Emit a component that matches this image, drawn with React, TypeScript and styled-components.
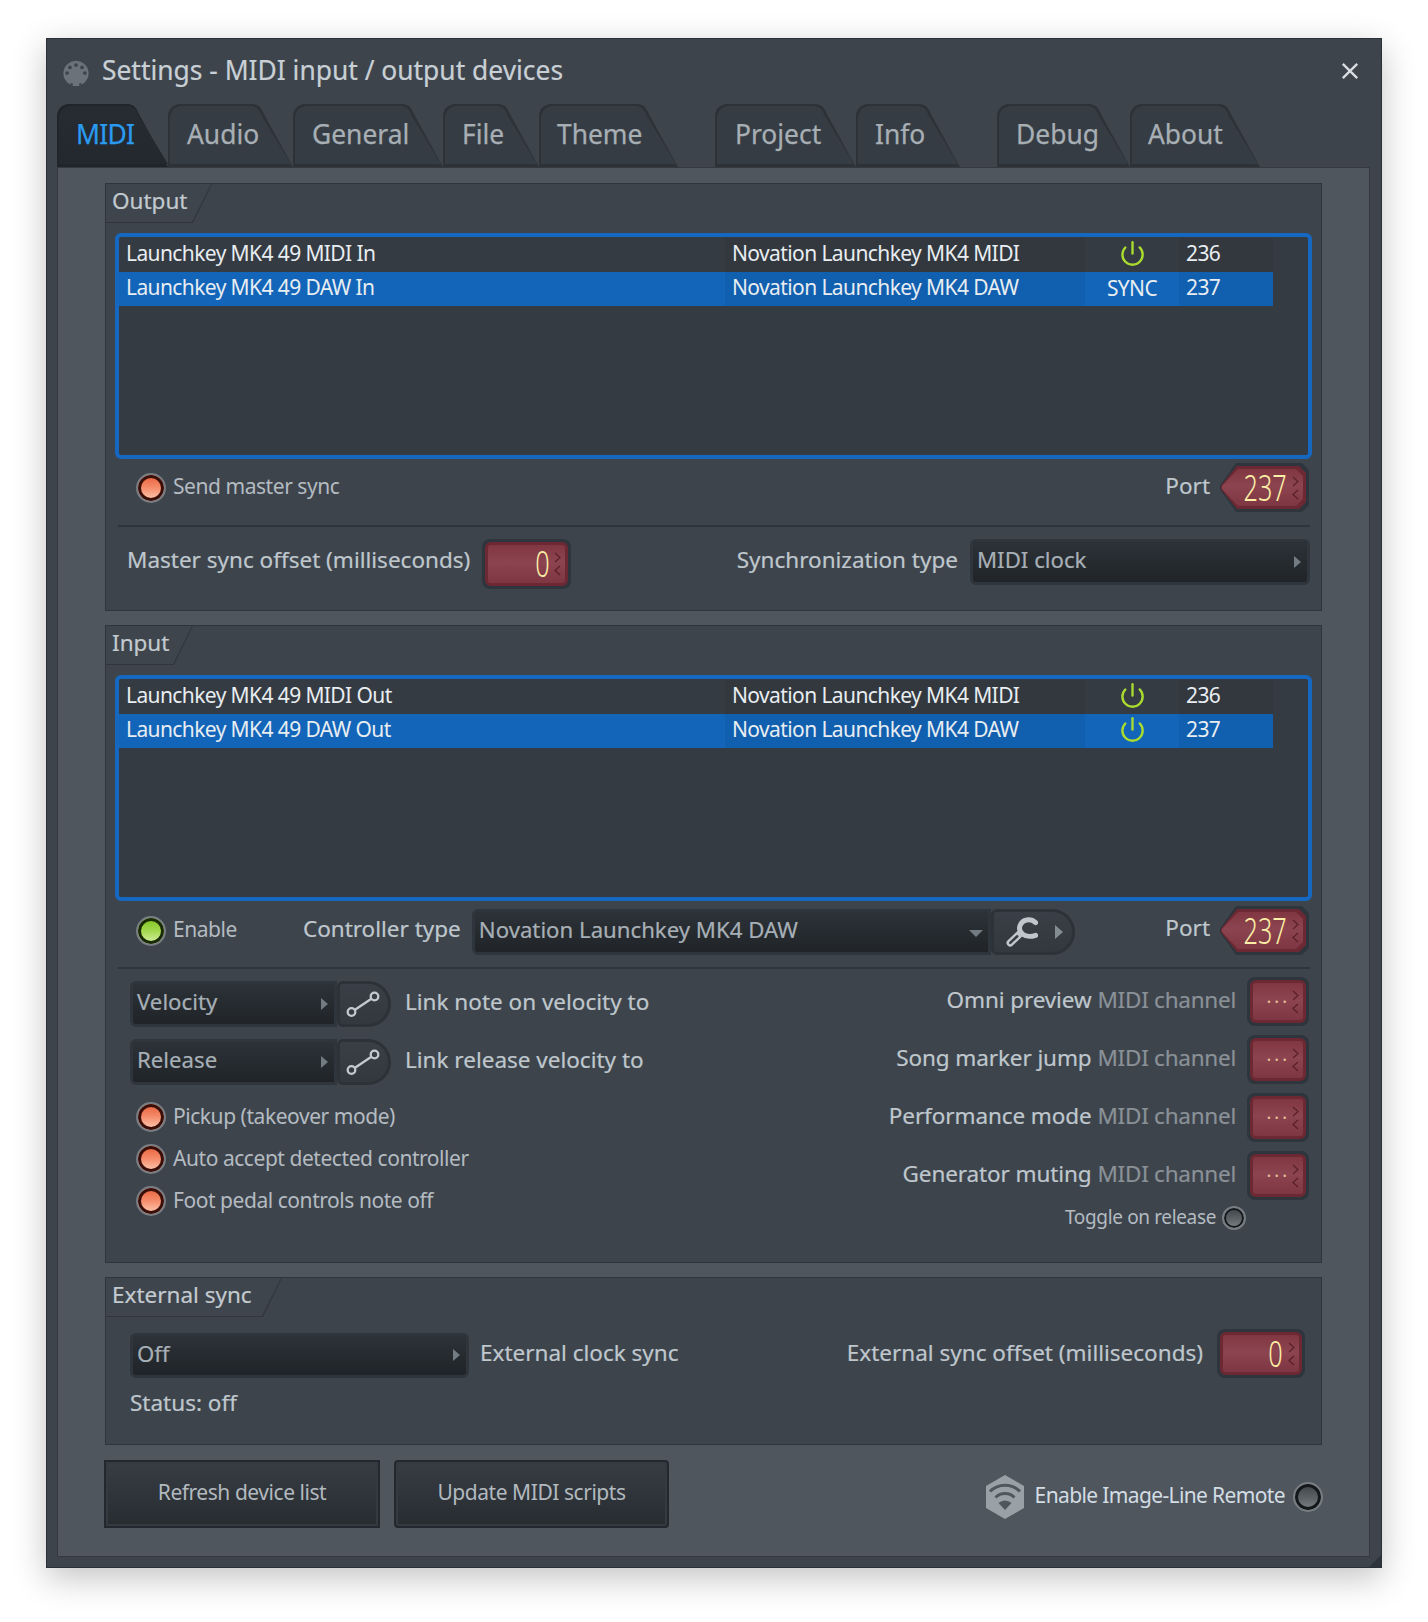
import React from 'react';
import styled, { createGlobalStyle } from 'styled-components';
import { Power } from 'lucide-react';

const Global = createGlobalStyle`
  html, body { margin: 0; background: #fff; }
  body { font-family: "Noto Sans", "Open Sans", sans-serif; }
  * { box-sizing: border-box; }
`;

const Page = styled.div`
  width: 1428px;
  height: 1622px;
  padding: 38px 46px;
  background: #fff;
  overflow: hidden;
`;

const Window = styled.div`
  position: relative;
  width: 1336px;
  height: 1530px;
  background: #3d444c;
  border: 1px solid #2a3037;
  box-shadow: 0 10px 32px rgba(0, 0, 0, 0.24);
  padding: 0 11px 10px 10px;
  display: flex;
  flex-direction: column;
`;

const Grip = styled.div`
  position: absolute;
  right: 0;
  bottom: 0;
  width: 12px;
  height: 12px;
  background: #2e343b;
  clip-path: polygon(100% 0, 100% 100%, 0 100%);
`;

const TitleBar = styled.div`
  height: 65px;
  flex: none;
  display: flex;
  align-items: center;
  padding: 2px 11px 0 5px;
  gap: 12px;
`;

const Title = styled.div`
  flex: 1;
  font-size: 26.4px;
  color: #c9d0d5;
  line-height: 1;
  padding-bottom: 4px;
  -webkit-text-stroke: 0.2px #c9d0d5;
`;

const CloseBtn = styled.svg`
  width: 18px;
  height: 18px;
  flex: none;
  margin-bottom: 3px;
`;

const TabBar = styled.div`
  display: flex;
  height: 63px;
  flex: none;
`;

const tabShape = `polygon(0 10px, 2px 5px, 5px 2px, 10px 0, calc(100% - 39px) 0, calc(100% - 34px) 2px, calc(100% - 31px) 6px, calc(100% - 28px) 12px, 100% 100%, 0 100%)`;

const Tab = styled.div<{ $w: number; $pad: number; $active?: boolean; $gap?: number }>`
  position: relative;
  width: ${(p) => p.$w}px;
  margin-left: ${(p) => p.$gap ?? 0}px;
  padding-left: ${(p) => p.$pad}px;
  flex: none;
  display: flex;
  align-items: center;
  font-size: 26.4px;
  line-height: 1;
  letter-spacing: ${(p) => (p.$active ? -0.7 : 0)}px;
  color: ${(p) => (p.$active ? '#2a9bf0' : '#a7afb5')};
  -webkit-text-stroke: 0.25px ${(p) => (p.$active ? '#2a9bf0' : '#a7afb5')};
  padding-bottom: 3px;
  &::before {
    content: '';
    position: absolute;
    inset: 0;
    background: ${(p) => (p.$active ? '#1f252a' : '#2c3238')};
    clip-path: ${tabShape};
  }
  &::after {
    content: '';
    position: absolute;
    inset: 2px ${(p) => (p.$active ? 0 : 2)}px 3px 2px;
    background: ${(p) => (p.$active ? 'linear-gradient(#262c31, #22282d)' : '#363c43')};
    clip-path: ${tabShape};
  }
  span {
    position: relative;
    z-index: 1;
  }
`;

const Panel = styled.div`
  flex: 1;
  background: #4f565e;
  border: 1px solid #33393f;
  padding: 15px 47px 0 47px;
  display: flex;
  flex-direction: column;
  gap: 14px;
`;

const Group = styled.section<{ $h: number }>`
  height: ${(p) => p.$h}px;
  flex: none;
  background: #3d444c;
  border: 1px solid #2f353c;
  padding: 0 9px;
  display: flex;
  flex-direction: column;
`;

const GroupHeading = styled.div<{ $w: number }>`
  position: relative;
  width: ${(p) => p.$w}px;
  height: 39px;
  margin-left: -9px;
  flex: none;
  display: flex;
  align-items: center;
  padding: 0 0 7px 6px;
  font-size: 22.5px;
  color: #c3cacf;
  -webkit-text-stroke: 0.2px #c3cacf;
  background: #30363c;
  clip-path: polygon(0 0, 100% 0, calc(100% - 19px) 100%, 0 100%);
  &::before {
    content: '';
    position: absolute;
    inset: 0 1px 1px 0;
    background: #3e454d;
    clip-path: polygon(0 0, 100% 0, calc(100% - 19px) 100%, 0 100%);
  }
  span {
    position: relative;
  }
`;

const List = styled.div`
  margin-top: 10px;
  height: 226px;
  flex: none;
  background: #353b42;
  border: 4px solid #1567c0;
  border-radius: 6px;
  padding-top: 1px;
`;

const Row = styled.div<{ $selected?: boolean }>`
  width: 1154px;
  height: 34px;
  display: grid;
  grid-template-columns: 606px 360px 94px 94px;
  grid-template-rows: 34px;
  font-size: 21px;
  letter-spacing: -0.6px;
  line-height: 28px;
  color: #e8edf1;
  background: ${(p) => (p.$selected ? '#1265b9' : 'transparent')};
`;

const Cell = styled.div<{ $center?: boolean; $dim?: boolean }>`
  padding: 0 0 ${(p) => (p.$center ? 3 : 4)}px ${(p) => (p.$center ? 0 : 7)}px;
  display: flex;
  align-items: center;
  justify-content: ${(p) => (p.$center ? 'center' : 'flex-start')};
  background: ${(p) => (p.$dim ? 'rgba(0,0,0,0.05)' : 'transparent')};
  white-space: nowrap;
`;

const FlexRow = styled.div<{ $mt?: number; $pl?: number; $pr?: number; $h: number }>`
  display: flex;
  align-items: center;
  flex: none;
  height: ${(p) => p.$h}px;
  margin-top: ${(p) => p.$mt ?? 0}px;
  padding-left: ${(p) => p.$pl ?? 0}px;
  padding-right: ${(p) => p.$pr ?? 0}px;
`;

const Push = styled.div`
  margin-left: auto;
  display: flex;
  align-items: center;
`;

const Label = styled.div<{ $ml?: number; $mr?: number; $pb?: number }>`
  font-size: 22.5px;
  line-height: 30px;
  color: #bfc7cd;
  -webkit-text-stroke: 0.2px #bfc7cd;
  white-space: nowrap;
  margin-left: ${(p) => p.$ml ?? 0}px;
  margin-right: ${(p) => p.$mr ?? 0}px;
  padding-bottom: ${(p) => p.$pb ?? 5}px;
`;

const Strong = styled.span`
  letter-spacing: -0.1px;
`;

const Dim = styled.span`
  color: #8a9197;
  -webkit-text-stroke: 0.2px #8a9197;
  letter-spacing: -0.25px;
`;

const CheckLabel = styled.div<{ $small?: boolean }>`
  font-size: ${(p) => (p.$small ? 19 : 21)}px;
  letter-spacing: ${(p) => (p.$small ? -0.36 : -0.45)}px;
  line-height: 28px;
  color: #b4bbc1;
  white-space: nowrap;
  padding-bottom: 3px;
`;

const ledColors = {
  red: { ring: '#3a0f09', grad: 'linear-gradient(#e8603a, #f58d6c 50%, #ffcfb8)' },
  green: { ring: '#1a2a06', grad: 'linear-gradient(#7cc41e, #a4d94f 50%, #d9f2a8)' },
  off: { ring: '#14181b', grad: 'linear-gradient(#3e4347, #5c6266 55%, #7c8387)' },
};

const Led = styled.div<{ $state: 'red' | 'green' | 'off'; $size?: number }>`
  width: ${(p) => p.$size ?? 30}px;
  height: ${(p) => p.$size ?? 30}px;
  flex: none;
  border-radius: 50%;
  border: 2px solid #777d82;
  background: ${(p) => ledColors[p.$state].grad};
  box-shadow: inset 0 0 0 ${(p) => ((p.$size ?? 30) < 28 ? 2 : 3)}px ${(p) => ledColors[p.$state].ring};
`;

const CheckRow = styled.div`
  display: flex;
  align-items: center;
  gap: 7px;
  height: 30px;
`;

const hexShape = 'polygon(16px 0, calc(100% - 7px) 0, 100% 7px, 100% calc(100% - 7px), calc(100% - 7px) 100%, 16px 100%, 0 54%, 0 46%)';

const SpinnerFrame = styled.div<{ $w: number; $h: number; $hex?: boolean }>`
  position: relative;
  width: ${(p) => p.$w}px;
  height: ${(p) => p.$h}px;
  flex: none;
  background: #2f353c;
  border-radius: 8px;
  clip-path: ${(p) => (p.$hex ? hexShape : 'none')};
  &::before {
    content: '';
    position: absolute;
    inset: 3px 3px 3px ${(p) => (p.$hex ? 1 : 3)}px;
    background: #6c2833;
    border-radius: 6px;
    clip-path: ${(p) => (p.$hex ? hexShape : 'none')};
  }
  &::after {
    content: '';
    position: absolute;
    inset: 6px 6px 6px ${(p) => (p.$hex ? 2 : 6)}px;
    background: linear-gradient(180deg, #813741, #8b4450 45%, #7e3642);
    border-radius: 3px;
    clip-path: ${(p) => (p.$hex ? hexShape : 'none')};
  }
`;

const SpinnerValue = styled.div<{ $dots?: boolean }>`
  position: absolute;
  z-index: 1;
  top: 0;
  bottom: 0;
  right: ${(p) => (p.$dots ? 19 : 22)}px;
  display: flex;
  align-items: center;
  color: ${(p) => (p.$dots ? '#e8c09c' : '#fbeea6')};
  font-size: ${(p) => (p.$dots ? 18 : 36)}px;
  font-weight: ${(p) => (p.$dots ? 400 : 300)};
  line-height: 1;
  transform: scaleX(${(p) => (p.$dots ? 1 : 0.7)});
  transform-origin: right center;
  letter-spacing: ${(p) => (p.$dots ? '3px' : '0')};
  padding-bottom: ${(p) => (p.$dots ? 2 : 0)}px;
`;

const SpinnerArrows = styled.svg`
  position: absolute;
  z-index: 1;
  right: 8px;
  top: 50%;
  margin-top: -12px;
  width: 10px;
  height: 24px;
`;

const SpinnerGap = styled.div`
  margin-left: 12px;
`;

const Spinner: React.FC<{ w: number; h: number; hex?: boolean; value: string }> = ({ w, h, hex, value }) => (
  <SpinnerFrame $w={w} $h={h} $hex={hex}>
    <SpinnerValue $dots={value === '···'}>{value}</SpinnerValue>
    <SpinnerArrows viewBox="0 0 10 24" fill="none" stroke="#5a1f2a" strokeWidth="1.2">
      <path d="M2 1l5 4.5L2 10" />
      <path d="M7 14l-5 4.5L7 23" />
    </SpinnerArrows>
  </SpinnerFrame>
);

const Select = styled.div<{ $w: number; $h?: number; $joined?: boolean; $mt?: number; $mb?: number }>`
  position: relative;
  width: ${(p) => p.$w}px;
  height: ${(p) => p.$h ?? 46}px;
  flex: none;
  display: flex;
  align-items: center;
  margin: ${(p) => p.$mt ?? 0}px 0 ${(p) => p.$mb ?? 0}px;
  padding: 0 0 5px 4px;
  font-size: 22.2px;
  color: #a7afb6;
  -webkit-text-stroke: 0.2px #a7afb6;
  white-space: nowrap;
  border: 3px solid #2f353c;
  border-radius: ${(p) => (p.$joined ? '6px 0 0 6px' : '6px')};
  background: linear-gradient(#2c3238, #202428);
`;

const ArrowRight = styled.i`
  position: absolute;
  right: 6px;
  top: 50%;
  margin-top: -6.5px;
  width: 0;
  height: 0;
  border-top: 6.5px solid transparent;
  border-bottom: 6.5px solid transparent;
  border-left: 7px solid #747c83;
`;

const ArrowDown = styled.i`
  position: absolute;
  right: 5px;
  top: 50%;
  margin-top: -2px;
  width: 0;
  height: 0;
  border-left: 7px solid transparent;
  border-right: 7px solid transparent;
  border-top: 7px solid #747c83;
`;

const SideButton = styled.div<{ $w: number; $pad: number; $mt?: number }>`
  position: relative;
  width: ${(p) => p.$w}px;
  height: 46px;
  flex: none;
  display: flex;
  align-items: center;
  margin-top: ${(p) => p.$mt ?? 0}px;
  padding-left: ${(p) => p.$pad}px;
  border: 3px solid #2c3238;
  border-radius: 6px 24px 24px 6px;
  background: linear-gradient(#393f46, #32383e);
`;

const ButtonArrow = styled.i`
  position: absolute;
  right: 9px;
  top: 50%;
  margin-top: -7px;
  width: 0;
  height: 0;
  border-top: 7px solid transparent;
  border-bottom: 7px solid transparent;
  border-left: 8px solid #848c93;
`;

const LinkIcon: React.FC = () => (
  <svg width="34" height="27" viewBox="0 0 34 27" fill="none" stroke="#c3c9ce" strokeWidth="2.3">
    <circle cx="5.5" cy="21" r="3.8" />
    <circle cx="28.5" cy="5.5" r="3.8" />
    <path d="M9 18.7L25 8" />
  </svg>
);

const WrenchIcon: React.FC = () => (
  <svg width="32" height="31" viewBox="0 0 34 32" fill="none" strokeLinecap="round">
    <path d="M31.5 5.5C26 0.5 17.5 2 15 8.5C12.5 15 19 23 31.5 19" stroke="#c0c7cc" strokeWidth="5.2" />
    <path d="M14 18L4.5 27" stroke="#c0c7cc" strokeWidth="7.8" />
    <path d="M12 20L4.5 27" stroke="#363c43" strokeWidth="2.6" />
  </svg>
);

const Divider = styled.div<{ $mt: number }>`
  height: 2px;
  flex: none;
  margin: ${(p) => p.$mt}px 2px 0 3px;
  background: #2e343b;
`;

const Columns = styled.div`
  flex: none;
  display: flex;
  justify-content: space-between;
  padding-right: 3px;
  margin-top: 8px;
`;

const LeftCol = styled.div`
  padding: 4px 0 0 15px;
  display: flex;
  flex-direction: column;
`;

const RightCol = styled.div`
  display: flex;
  flex-direction: column;
  align-items: flex-end;
  gap: 9px;
`;

const LinkRow = styled.div`
  display: flex;
  align-items: center;
  height: 46px;
  margin-bottom: 12px;
`;

const Checks = styled.div`
  display: flex;
  flex-direction: column;
  gap: 12px;
  margin: 5px 0 0 6px;
`;

const ChannelRow = styled.div`
  display: flex;
  align-items: center;
  gap: 11px;
  height: 49px;
`;

const ToggleRow = styled.div`
  display: flex;
  align-items: center;
  gap: 6px;
  height: 24px;
  margin: -3px 63px 0 0;
`;

const Status = styled.div`
  margin: 11px 0 0 15px;
  font-size: 22.5px;
  line-height: 28px;
  color: #bfc7cd;
  -webkit-text-stroke: 0.2px #bfc7cd;
`;

const Footer = styled.div`
  flex: none;
  display: flex;
  align-items: center;
  margin: 1px -1px 0 -1px;
  height: 68px;
`;

const Btn = styled.div<{ $w: number; $square?: boolean; $gap?: number }>`
  width: ${(p) => p.$w}px;
  height: 68px;
  flex: none;
  margin-left: ${(p) => p.$gap ?? 0}px;
  display: flex;
  align-items: center;
  justify-content: center;
  padding-bottom: 4px;
  font-size: 21px;
  letter-spacing: -0.45px;
  color: #b2b9bf;
  border: 2px solid #22282e;
  border-radius: ${(p) => (p.$square ? 0 : 4)}px;
  background: linear-gradient(#373d43, #272c31);
  box-shadow: inset 0 0 0 2px #343a41;
`;

const Remote = styled.div`
  margin-left: auto;
  display: flex;
  align-items: center;
  gap: 8px;
  padding-top: 5px;
`;

const RemoteLabel = styled.div`
  font-size: 21px;
  letter-spacing: -0.63px;
  color: #d3dde4;
  margin: 0 0 3px 3px;
  white-space: nowrap;
`;

const PowerIcon: React.FC = () => <Power size={27} color="#a9dc2e" strokeWidth={2.1} />;

const App: React.FC = () => (
  <Page>
    <Global />
    <Window>
      <TitleBar>
        <svg width="28" height="28" viewBox="0 0 30 30">
          <path d="M15 2a13.5 13.5 0 0 1 6 25.6V26h-2.5v3h-7v-3H9v1.6A13.5 13.5 0 0 1 15 2z" fill="#6b7279" />
          <g fill="#3d444c">
            <circle cx="15" cy="6.5" r="2" />
            <circle cx="8.5" cy="9" r="2" />
            <circle cx="21.5" cy="9" r="2" />
            <circle cx="5.5" cy="15" r="2" />
            <circle cx="24.5" cy="15" r="2" />
          </g>
        </svg>
        <Title>Settings - MIDI input / output devices</Title>
        <CloseBtn viewBox="0 0 20 20" stroke="#d8dde1" strokeWidth="2.6" fill="none">
          <path d="M2 2l16 16M18 2L2 18" />
        </CloseBtn>
      </TitleBar>
      <TabBar>
        <Tab $w={111} $pad={19} $active><span>MIDI</span></Tab>
        <Tab $w={125} $pad={19}><span>Audio</span></Tab>
        <Tab $w={150} $pad={19}><span>General</span></Tab>
        <Tab $w={96} $pad={19}><span>File</span></Tab>
        <Tab $w={139} $pad={18}><span>Theme</span></Tab>
        <Tab $w={141} $pad={20} $gap={37}><span>Project</span></Tab>
        <Tab $w={104} $pad={19}><span>Info</span></Tab>
        <Tab $w={133} $pad={19} $gap={37}><span>Debug</span></Tab>
        <Tab $w={130} $pad={18}><span>About</span></Tab>
      </TabBar>
      <Panel>
        <Group $h={428}>
          <GroupHeading $w={106}><span>Output</span></GroupHeading>
          <List>
            <Row>
              <Cell>Launchkey MK4 49 MIDI In</Cell>
              <Cell $dim>Novation Launchkey MK4 MIDI</Cell>
              <Cell $center><PowerIcon /></Cell>
              <Cell $dim>236</Cell>
            </Row>
            <Row $selected>
              <Cell>Launchkey MK4 49 DAW In</Cell>
              <Cell $dim>Novation Launchkey MK4 DAW</Cell>
              <Cell $center>SYNC</Cell>
              <Cell $dim>237</Cell>
            </Row>
          </List>
          <FlexRow $h={49} $mt={4} $pl={21} $pr={3}>
            <CheckRow>
              <Led $state="red" />
              <CheckLabel>Send master sync</CheckLabel>
            </CheckRow>
            <Push>
              <Label $mr={10} $pb={3}>Port</Label>
              <Spinner w={89} h={49} hex value="237" />
            </Push>
          </FlexRow>
          <Divider $mt={13} />
          <FlexRow $h={50} $mt={12} $pl={12} $pr={2}>
            <Label $pb={9}>Master sync offset (milliseconds)</Label>
            <SpinnerGap><Spinner w={89} h={50} value="0" /></SpinnerGap>
            <Push>
              <Label $mr={12} $pb={9}>Synchronization type</Label>
              <Select $w={340} $mb={4}>MIDI clock<ArrowRight /></Select>
            </Push>
          </FlexRow>
        </Group>
        <Group $h={638}>
          <GroupHeading $w={87}><span>Input</span></GroupHeading>
          <List>
            <Row>
              <Cell>Launchkey MK4 49 MIDI Out</Cell>
              <Cell $dim>Novation Launchkey MK4 MIDI</Cell>
              <Cell $center><PowerIcon /></Cell>
              <Cell $dim>236</Cell>
            </Row>
            <Row $selected>
              <Cell>Launchkey MK4 49 DAW Out</Cell>
              <Cell $dim>Novation Launchkey MK4 DAW</Cell>
              <Cell $center><PowerIcon /></Cell>
              <Cell $dim>237</Cell>
            </Row>
          </List>
          <FlexRow $h={49} $mt={5} $pl={21} $pr={3}>
            <CheckRow>
              <Led $state="green" />
              <CheckLabel>Enable</CheckLabel>
            </CheckRow>
            <Label $ml={66} $mr={11} $pb={3}>Controller type</Label>
            <Select $w={519} $joined $mt={3}>Novation Launchkey MK4 DAW<ArrowDown /></Select>
            <SideButton $w={84} $pad={12} $mt={3}>
              <WrenchIcon />
              <ButtonArrow />
            </SideButton>
            <Push>
              <Label $mr={10} $pb={5}>Port</Label>
              <Spinner w={89} h={49} hex value="237" />
            </Push>
          </FlexRow>
          <Divider $mt={12} />
          <Columns>
            <LeftCol>
              <LinkRow>
                <Select $w={207} $joined>Velocity<ArrowRight /></Select>
                <SideButton $w={54} $pad={6}><LinkIcon /></SideButton>
                <Label $ml={14}>Link note on velocity to</Label>
              </LinkRow>
              <LinkRow>
                <Select $w={207} $joined>Release<ArrowRight /></Select>
                <SideButton $w={54} $pad={6}><LinkIcon /></SideButton>
                <Label $ml={14}>Link release velocity to</Label>
              </LinkRow>
              <Checks>
                <CheckRow><Led $state="red" /><CheckLabel>Pickup (takeover mode)</CheckLabel></CheckRow>
                <CheckRow><Led $state="red" /><CheckLabel>Auto accept detected controller</CheckLabel></CheckRow>
                <CheckRow><Led $state="red" /><CheckLabel>Foot pedal controls note off</CheckLabel></CheckRow>
              </Checks>
            </LeftCol>
            <RightCol>
              <ChannelRow><Label $pb={3}><Strong>Omni preview</Strong> <Dim>MIDI channel</Dim></Label><Spinner w={62} h={49} value="···" /></ChannelRow>
              <ChannelRow><Label $pb={3}><Strong>Song marker jump</Strong> <Dim>MIDI channel</Dim></Label><Spinner w={62} h={49} value="···" /></ChannelRow>
              <ChannelRow><Label $pb={3}><Strong>Performance mode</Strong> <Dim>MIDI channel</Dim></Label><Spinner w={62} h={49} value="···" /></ChannelRow>
              <ChannelRow><Label $pb={3}><Strong>Generator muting</Strong> <Dim>MIDI channel</Dim></Label><Spinner w={62} h={49} value="···" /></ChannelRow>
              <ToggleRow><CheckLabel $small>Toggle on release</CheckLabel><Led $state="off" $size={24} /></ToggleRow>
            </RightCol>
          </Columns>
        </Group>
        <Group $h={168}>
          <GroupHeading $w={176}><span>External sync</span></GroupHeading>
          <FlexRow $h={49} $mt={12} $pl={15} $pr={7}>
            <Select $w={339} $h={45} $mt={4}>Off<ArrowRight /></Select>
            <Label $ml={11} $pb={2}>External clock sync</Label>
            <Push>
              <Label $mr={14} $pb={2}>External sync offset (milliseconds)</Label>
              <Spinner w={88} h={49} value="0" />
            </Push>
          </FlexRow>
          <Status>Status: off</Status>
        </Group>
        <Footer>
          <Btn $w={276} $square>Refresh device list</Btn>
          <Btn $w={275} $gap={14}>Update MIDI scripts</Btn>
          <Remote>
            <svg width="38" height="44" viewBox="0 0 38 44">
              <path d="M19 0l19 11v22L19 44 0 33V11z" fill="#9aa1a6" />
              <g fill="none" stroke="#4f565e" strokeWidth="3">
                <path d="M4 16.5a21 21 0 0 1 30 0" />
                <path d="M9.5 22.5a13.5 13.5 0 0 1 19 0" />
              </g>
              <path d="M12.5 28a9.5 9.5 0 0 1 13 0L19 35z" fill="#4f565e" />
            </svg>
            <RemoteLabel>Enable Image-Line Remote</RemoteLabel>
            <Led $state="off" />
          </Remote>
        </Footer>
      </Panel>
      <Grip />
    </Window>
  </Page>
);

export default App;
